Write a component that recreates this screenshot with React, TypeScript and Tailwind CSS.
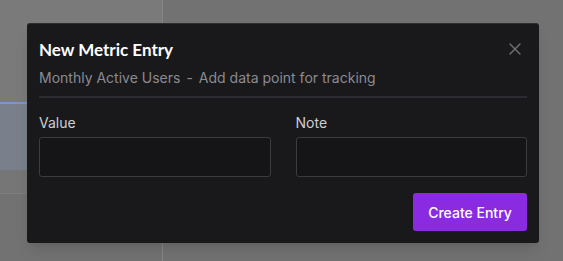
import { X } from 'lucide-react';

function Backdrop() {
  // dimmed app behind the dialog
  return (
    <div className="flex h-full w-full">
      <div className="flex w-[163px] flex-col border-r border-[#858585]">
        <div className="h-[102px] bg-[#7a7a7a]" />
        <div className="h-[2px] bg-[#7b95cf]" />
        <div className="h-[66px] bg-[#7a808b]" />
        <div className="h-[24px] border-b border-[#7e7e7e] bg-[#767676]" />
        <div className="flex-1 bg-[#727272]" />
      </div>
      <div className="flex-1 bg-[#727272]" />
    </div>
  );
}

export default function App() {
  return (
    <div
      className="relative h-[261px] w-[563px] overflow-hidden"
      style={{ fontFamily: 'Inter, "Noto Sans", sans-serif' }}
    >
      <Backdrop />

      <div className="absolute left-[27px] top-[23px] w-[512px] rounded-[3px] border-t border-[#2e2e31] bg-[#19191c] px-[12px] pb-[12px] pt-[14px] shadow-lg">
        <button className="absolute right-[14px] top-[15px] text-[#6d6d72]">
          <X className="h-[20px] w-[20px]" strokeWidth={1.7} />
        </button>

        <h2
          className="text-[17px] font-bold leading-6 text-white"
          style={{ fontFamily: 'Lato, Inter, sans-serif' }}
        >
          New Metric Entry
        </h2>
        <p className="mt-[6px] text-[14px] leading-5 text-[#8b8b91]">
          Monthly Active Users<span className="mx-[6px]">-</span>Add data point for tracking
        </p>

        <div className="mt-[8px] h-[2px] bg-[#2b2b31]" />

        <div className="mt-[15px] grid grid-cols-2 gap-[25px]">
          <div>
            <label className="block text-[14px] leading-5 text-[#cfcfd3]">
              Value
            </label>
            <input className="mt-[4px] block h-[40px] w-full rounded-[3px] border border-[#3b3b42] bg-[#151518] px-3 text-sm text-white outline-none" />
          </div>
          <div>
            <label className="block text-[14px] leading-5 text-[#cfcfd3]">
              Note
            </label>
            <input className="mt-[4px] block h-[40px] w-full rounded-[3px] border border-[#3b3b42] bg-[#151518] px-3 text-sm text-white outline-none" />
          </div>
        </div>

        <div className="mt-[16px] flex justify-end">
          <button className="h-[38px] w-[114px] rounded-[3px] bg-[#8a2be2] text-[14px] font-medium text-white">
            Create Entry
          </button>
        </div>
      </div>
    </div>
  );
}
